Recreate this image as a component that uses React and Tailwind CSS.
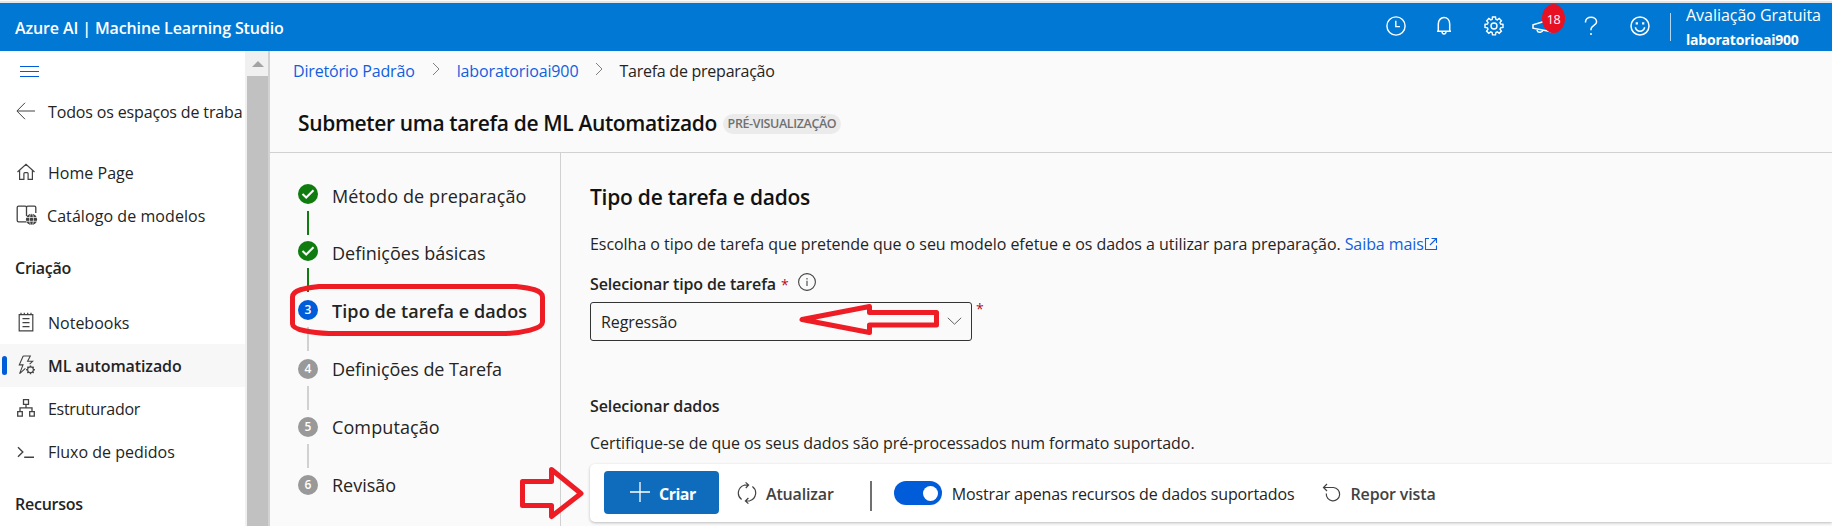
import React from "react";

function Icon({ className = "", w = 20, h = 20, sw = 1.2, children }) {
  return (
    <svg
      className={"shrink-0 " + className}
      width={w}
      height={h}
      viewBox={`0 0 ${w} ${h}`}
      fill="none"
      stroke="currentColor"
      strokeWidth={sw}
    >
      {children}
    </svg>
  );
}

const HomeIcon = () => (
  <Icon w={20} h={18}>
    <path d="M1.5 9 10 1.2 18.500 9M3.600 7.500V16.400H7.900V10.600Q7.900 9.600 8.900 9.600H11.100Q12.100 9.600 12.100 10.600V16.400H16.400V7.500" />
  </Icon>
);

const CatalogIcon = () => (
  <Icon w={22} h={20} sw={1.3}>
    <path d="M10.500 16.900H2.600Q1.200 16.900 1.200 15.500V2.600Q1.200 1.200 2.600 1.200H9.200Q10.500 1.200 10.500 2.600V11M10.500 2.600Q10.500 1.200 11.900 1.200H18.400Q19.800 1.200 19.800 2.600V8" />
    <circle cx="15.500" cy="14.400" r="5.600" fill="currentColor" stroke="none" />
    <ellipse cx="15.500" cy="14.400" rx="2" ry="5.600" stroke="#fff" strokeWidth="0.700" />
    <path d="M10 12.500H21M10 16.300H21" stroke="#fff" strokeWidth="0.700" />
  </Icon>
);

const NotebookIcon = () => (
  <Icon w={20} h={20}>
    <path d="M3.200 2.600H16.800V18.900H3.200ZM5 .8V3.200M8.300 .8V3.200M11.700 .8V3.200M15 .8V3.200M6.500 6.600H13.500M6.500 10.600H13.500M6.500 14.600H13.500" />
  </Icon>
);

const AutoMlIcon = () => (
  <Icon w={20} h={20} sw={1.1}>
    <path d="M7.200 1H14.300L11.600 6.300H16.600L13.600 9.200M7.200 1 3.300 9.900H7L3.600 18.600 9.400 13.300" />
    <circle cx="14.500" cy="14.800" r="2.900" />
    <path d="M14.500 10.400V12M14.500 17.600V19.200M10.100 14.800H11.700M17.300 14.800H18.900M11.400 11.700 12.500 12.800M16.500 16.800 17.600 17.900M11.400 17.900 12.500 16.800M16.500 12.800 17.600 11.700" strokeWidth="1.400" />
  </Icon>
);

const DesignerIcon = () => (
  <Icon w={20} h={20} sw={1.3}>
    <path d="M7.500 1.700H12.500V6.300H7.500ZM1.700 13.600H6.300V18.200H1.700ZM13.700 13.600H18.300V18.200H13.700ZM10 6.300V9.900M4 13.600V9.900H16V13.600" />
  </Icon>
);

const PromptIcon = () => (
  <Icon w={20} h={20} sw={1.4}>
    <path d="M2 6.200 6.800 11 2 15.800M8.200 16.300H18" />
  </Icon>
);

function NavRow({ icon, label, selected, className = "" }) {
  return (
    <div className={"flex h-[43px] shrink-0 items-center " + (selected ? "bg-[#f7f7f7]" : "")}>
      <div className={"ml-0.5 h-[19px] w-[5px] rounded-full " + (selected ? "bg-[#015cda]" : "")} />
      <div className="ml-[9px] flex w-[32px] justify-start pb-[2px] text-[#424242]">{icon}</div>
      <span className={className}>{label}</span>
    </div>
  );
}

function Sidebar() {
  return (
    <aside className="flex w-[245px] shrink-0 flex-col overflow-hidden bg-white text-[16px] whitespace-nowrap text-[#242424]">
      <div className="flex h-[41px] shrink-0 items-center pl-5 text-[#015cda]">
        <Icon w={19} h={13} sw={1}>
          <path d="M0 1.500H19M0 6.500H19M0 11.500H19" />
        </Icon>
      </div>
      <div className="mb-[19px] flex h-10 shrink-0 items-center pl-4 text-[#424242]">
        <Icon w={20} h={18} sw={1} className="mb-[3px]">
          <path d="M19 9H1.200M9 .8 .9 9 9 17.200" />
        </Icon>
        <span className="ml-3 tracking-[-0.15px] text-[#242424]">Todos os espaços de traba</span>
      </div>
      <NavRow icon={<HomeIcon />} label="Home Page" className="tracking-[0.03px]" />
      <NavRow icon={<CatalogIcon />} label="Catálogo de modelos" className="-ml-px tracking-[0.07px]" />
      <div className="flex h-16 shrink-0 items-center pb-0.5 pl-[15px] font-semibold tracking-[-0.25px]">Criação</div>
      <NavRow icon={<NotebookIcon />} label="Notebooks" />
      <NavRow icon={<AutoMlIcon />} label="ML automatizado" selected className="font-semibold tracking-[-0.1px]" />
      <NavRow icon={<DesignerIcon />} label="Estruturador" className="tracking-[-0.29px]" />
      <NavRow icon={<PromptIcon />} label="Fluxo de pedidos" />
      <div className="flex h-[61px] shrink-0 items-center pl-[15px] font-semibold tracking-[-0.25px]">Recursos</div>
    </aside>
  );
}

function Scrollbar() {
  return (
    <div className="flex w-[25px] shrink-0 flex-col border-r-2 border-[#d2d2d2] bg-[#f0f0f0] pl-0.5">
      <div className="flex h-[25px] items-center justify-center">
        <Icon w={12} h={6}>
          <path d="M0 6 6 0 12 6Z" fill="#a3a3a3" stroke="none" />
        </Icon>
      </div>
      <div className="flex-1 bg-[#c1c1c1]" />
    </div>
  );
}

function Header() {
  return (
    <header className="flex h-12 shrink-0 items-center bg-[#0078d4] text-white">
      <div className="mt-0.5 ml-[15px] text-[16px] font-semibold tracking-[-0.12px]">Azure AI | Machine Learning Studio</div>
      <div className="mb-[2px] ml-auto flex items-center">
        <Icon sw={1.4}>
          <circle cx="10" cy="10" r="9.100" />
          <path d="M9.800 4.800V10.600H14" />
        </Icon>
        <Icon className="ml-7" sw={1.5}>
          <path d="M3 15.300H17M4.300 15.300V8C4.300 4.200 6.800 1.600 10 1.600S15.700 4.200 15.700 8V15.300M8 15.800Q8.200 18 10 18T12 15.800" />
        </Icon>
        <Icon className="ml-[30px]" sw={1.4}>
          <path d="M8.5 1h3l.4 2.300 1.400.6 1.900-1.400 2.200 2.200-1.400 1.900.6 1.400 2.400.4v3l-2.400.4-.6 1.400 1.400 1.900-2.200 2.200-1.900-1.400-1.400.6-.4 2.400h-3l-.4-2.400-1.400-.6-1.900 1.400-2.200-2.200 1.400-1.900-.6-1.400L1 11.400v-3l2.500-.4.6-1.400-1.400-1.900 2.200-2.200 1.900 1.400 1.400-.6z" />
          <circle cx="10" cy="10" r="3" />
        </Icon>
        <div className="relative ml-[28px] flex">
          <Icon sw={1.500}>
            <path d="M18.500 3.500V15.500L1 12.200V8.800ZM5.200 13V14.500Q5.700 16.600 8.500 16.200 10.800 15.600 11 14" />
          </Icon>
          <div className="absolute -top-[12px] left-[10px] flex h-[29px] w-[23px] items-center justify-center rounded-[50%] bg-[#e81123] pt-[3px] text-[12.5px] tracking-[-0.3px]">
            18
          </div>
        </div>
        <Icon className="ml-[29px]" sw={1.500}>
          <path d="M4.500 6.500V6C4.500 3 6.800 1.300 10 1.300S15.600 3.300 15.600 5.900C15.600 9 10 9.600 10 13V14.300M10 17V19" />
        </Icon>
        <Icon className="ml-[29px]" sw={1.5}>
          <circle cx="10" cy="10" r="9" />
          <path d="M5.300 11.300C6 14 8 15.200 10 15.200S14 14 14.700 11.300" />
          <path d="M6.800 6.200V8.400M13.200 6.200V8.400" strokeWidth="2.200" />
        </Icon>
      </div>
      <div className="ml-5 h-7 w-px bg-white/70" />
      <div className="ml-[15px] flex w-[146px] flex-col">
        <span className="text-[16px] leading-6 tracking-[-0.03px]">Avaliação Gratuita</span>
        <span className="pt-px text-[14px] leading-[23px] font-bold tracking-[-0.2px]">laboratorioai900</span>
      </div>
    </header>
  );
}

const Crumb = () => (
  <Icon w={8} h={14} sw={1} className="mb-[3px] text-[#808080]">
    <path d="M1 1 7 7 1 13" />
  </Icon>
);

const CONNECTOR_DONE = "bg-[#107c10]";
const CONNECTOR_TODO = "bg-[#d1d1d1]";

const steps = [
  { label: "Método de preparação", done: true, height: "h-[57px]", text: "mt-0.5 tracking-[0.12px]" },
  { label: "Definições básicas", done: true, height: "h-[59px]", text: "mt-0.5" },
  { label: "Tipo de tarefa e dados", n: 3, height: "h-[59px]", active: true, text: "mt-px font-semibold tracking-[0.08px]" },
  { label: "Definições de Tarefa", n: 4, height: "h-[58px]", text: "tracking-[-0.07px]" },
  { label: "Computação", n: 5, height: "h-[58px]", text: "tracking-[0.1px]" },
  { label: "Revisão", n: 6, height: "h-[40px]", last: true, text: "" },
];

function Step({ step }) {
  const dot = step.done ? "bg-[#107c10]" : step.active ? "bg-[#015cda]" : "bg-[#999999]";
  return (
    <div className={"flex " + step.height}>
      <div className="flex w-5 flex-col items-center">
        <div className={"flex size-5 shrink-0 items-center justify-center rounded-full text-[12px] font-semibold text-white " + dot}>
          {step.done ? (
            <Icon w={14} h={12} sw={2}>
              <path d="M1.500 6 5.200 9.500 12.500 2.200" />
            </Icon>
          ) : (
            step.n
          )}
        </div>
        {!step.last && <div className={"mt-[7px] h-6 w-0.5 " + (step.done ? CONNECTOR_DONE : CONNECTOR_TODO)} />}
      </div>
      <span className={"ml-[14px] h-5 text-[18px] leading-5 " + step.text}>{step.label}</span>
    </div>
  );
}

function TaskForm() {
  return (
    <section className="flex min-w-0 flex-1 flex-col pl-[29px] text-[16px] text-[#242424]">
      <h2 className="mt-[28px] text-[21px] leading-8 font-semibold tracking-[-0.25px] text-[#111]">Tipo de tarefa e dados</h2>
      <p className="mt-[19px] flex items-center leading-6">
        <span className="tracking-[-0.045px]">
          Escolha o tipo de tarefa que pretende que o seu modelo efetue e os dados a utilizar para preparação.
        </span>
        <a className="ml-1 flex items-center text-[#115ee0]">
          <span className="tracking-[-0.08px]">Saiba mais</span>
          <Icon w={14} h={14} sw={1.1}>
            <path d="M5 1.500H1.500V12.500H12.500V8.500M7.500 1.500H12.500V6M12.500 1.500 6 8" />
          </Icon>
        </a>
      </p>
      <div className="mt-4 flex h-6 items-center font-semibold">
        <span className="tracking-[-0.13px]">Selecionar tipo de tarefa</span>
        <span className="ml-[5px] text-[14px] font-normal text-[#b10e1c]">*</span>
        <Icon w={18} h={18} sw={1.1} className="mb-1 ml-[9px] text-[#424242]">
          <circle cx="9" cy="9" r="8.400" />
          <path d="M9 7.800V13M9 5V6.400" />
        </Icon>
      </div>
      <div className="mt-[6px] flex">
        <div className="flex h-[39px] w-[382px] items-center justify-between rounded-[3px] border border-[#333] pr-[9px] pl-[10px]">
          <span className="tracking-[-0.09px]">Regressão</span>
          <Icon w={15} h={8} sw={1} className="mb-[2px] text-[#616161]">
            <path d="M.8 .8 7.500 7.200 14.200 .8" />
          </Icon>
        </div>
        <span className="ml-1 text-[14px] leading-[13px] text-[#b10e1c]">*</span>
      </div>
      <div className="mt-[53px] leading-6 font-semibold tracking-[-0.1px]">Selecionar dados</div>
      <p className="mt-[13px] leading-6 tracking-[-0.045px]">
        Certifique-se de que os seus dados são pré-processados num formato suportado.
      </p>
      <div className="mt-[9px] flex h-[58px] shrink-0 items-center rounded-l-[5px] bg-white pl-[14px] whitespace-nowrap shadow-[0_1px_3px_rgba(0,0,0,0.25)]">
        <button className="mb-px flex h-[43px] w-[115px] items-center rounded-[4px] bg-[#0f6cbd] pl-[26px] font-bold text-white">
          <Icon sw={1.3} className="mb-px">
            <path d="M10 0V20M0 10H20" />
          </Icon>
          <span className="mt-[2px] ml-[9px] tracking-[-0.5px]">Criar</span>
        </button>
        <Icon w={20} h={22} sw={1.2} className="ml-[18px] text-[#424242]">
          <path d="M4.600 17.600A8.200 8.200 0 0 1 7.200 3.200L11.500 3M15.400 4.400A8.200 8.200 0 0 1 12.800 18.800L8.500 19M8.600 .4 11.600 3 8.800 6M11.400 16 8.400 19 11.400 21.600" />
        </Icon>
        <span className="mt-px ml-[9px] font-semibold tracking-[-0.16px] text-[#424242]">Atualizar</span>
        <div className="mt-[6px] ml-[36px] h-[30px] w-0.5 bg-[#707070]" />
        <div className="ml-[22px] flex h-6 w-12 items-center justify-end rounded-full bg-[#015cda] pr-[4px]">
          <div className="size-[15px] rounded-full bg-white" />
        </div>
        <span className="mt-px ml-[10px] tracking-[-0.12px]">Mostrar apenas recursos de dados suportados</span>
        <Icon w={20} h={20} sw={1.2} className="ml-[27px] text-[#424242]">
          <path d="M1.500 4.500H11.500A6.700 6.700 0 1 1 4.300 10.500M5 1 1.500 4.500 5 8" />
        </Icon>
        <span className="mt-px ml-[9px] font-semibold tracking-[-0.15px] text-[#424242]">Repor vista</span>
      </div>
    </section>
  );
}

function Annotations() {
  return (
    <svg
      className="pointer-events-none absolute inset-0"
      width="1832"
      height="526"
      viewBox="0 0 1832 526"
      fill="none"
      stroke="#ee1c24"
      strokeWidth="5"
    >
      <path d="M319 286.500H516C530 288 542.500 290 542.500 297V322C542.500 329 522 333 506 333.500H329C313 333 292.500 330 292.500 324V297C292.500 290 305 288 319 286.500Z" />
      <path d="M802 319.500 869.500 306.500V312.500H936.500V325H869.500V332.500Z" strokeLinejoin="round" />
      <path d="M522.500 481.500H551.500V469.500L581 493.500 551.500 516.500V505.500H522.500Z" strokeLinejoin="round" />
    </svg>
  );
}

export default function App() {
  return (
    <div className="relative flex h-[526px] w-[1832px] flex-col overflow-hidden bg-[#fafafa] font-['Open_Sans','Noto_Sans',sans-serif]">
      <div className="mt-px h-0.5 shrink-0 bg-[#e5e5e5]" />
      <Header />
      <div className="flex min-h-0 flex-1">
        <Sidebar />
        <Scrollbar />
        <main className="flex min-w-0 flex-1 flex-col">
          <nav className="flex h-[39px] shrink-0 items-center pl-[23px] text-[16px] text-[#115ee0]">
            <span className="tracking-[-0.16px]">Diretório Padrão</span>
            <span className="mr-[17px] ml-[17px] flex"><Crumb /></span>
            <span className="tracking-[-0.12px]">laboratorioai900</span>
            <span className="mr-[16px] ml-[17px] flex"><Crumb /></span>
            <span className="tracking-[-0.25px] text-[#242424]">Tarefa de preparação</span>
          </nav>
          <div className="flex h-[63px] shrink-0 items-center border-b border-[#d1d1d1] pt-[5px] pl-[28px]">
            <h1 className="text-[21px] font-semibold tracking-[-0.36px] text-[#111]">Submeter uma tarefa de ML Automatizado</h1>
            <span className="mt-px ml-[6px] flex h-5 w-[118px] items-center justify-center rounded-full bg-[#ebebeb] pt-px text-[12.5px] font-semibold tracking-[-0.38px] text-[#707070]">
              PRÉ-VISUALIZAÇÃO
            </span>
          </div>
          <div className="flex min-h-0 flex-1">
            <div className="w-[291px] shrink-0 border-r border-[#d1d1d1] pt-[31px] pl-7 text-[#242424]">
              {steps.map((s) => (
                <Step key={s.label} step={s} />
              ))}
            </div>
            <TaskForm />
          </div>
        </main>
      </div>
      <Annotations />
    </div>
  );
}
